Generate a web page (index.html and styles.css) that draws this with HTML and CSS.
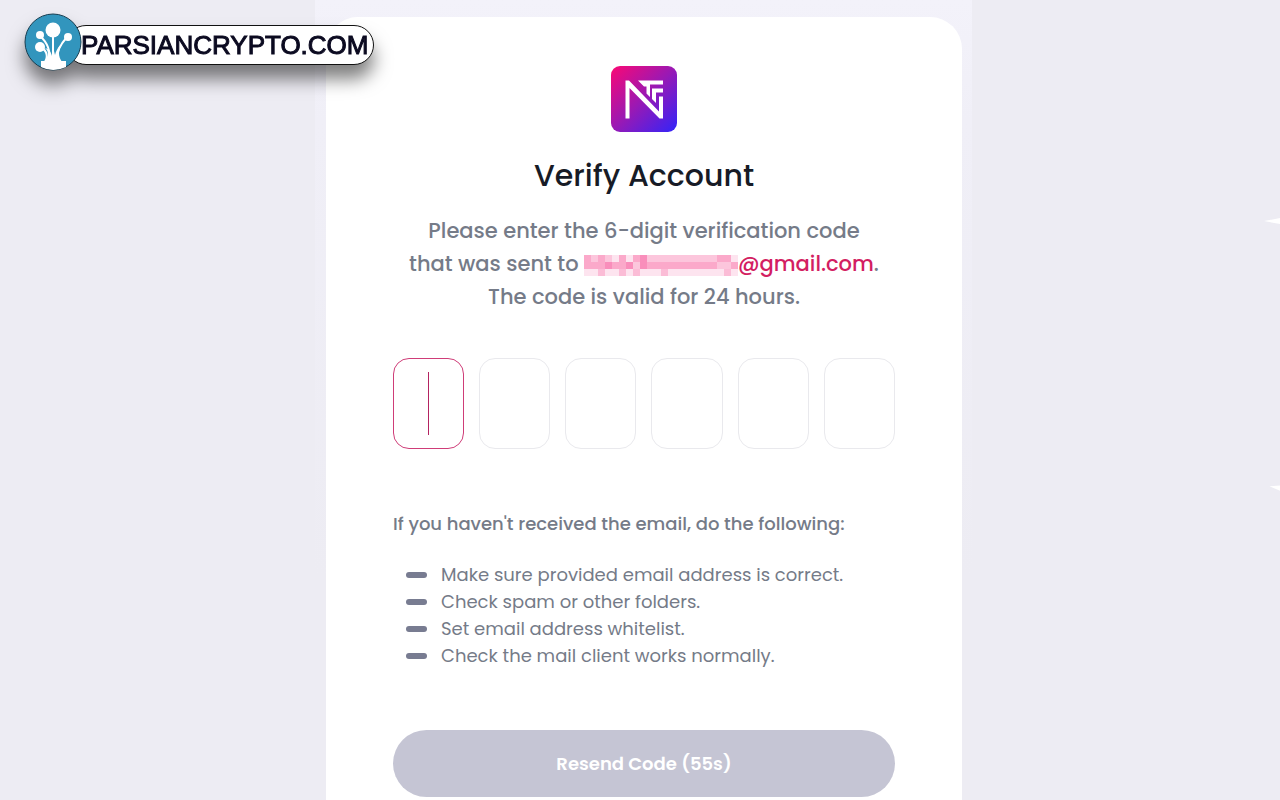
FILE: index.html
```html
<!DOCTYPE html>
<html lang="en">
<head>
<meta charset="utf-8">
<meta name="viewport" content="width=device-width, initial-scale=1">
<title>Verify Account</title>
<link rel="stylesheet" href="styles.css">
</head>
<body>
<a class="brand" href="#">
  <svg class="brand-icon" viewBox="0 0 58 58" aria-hidden="true">
    <circle cx="29" cy="29" r="28" fill="#3295bd" stroke="#173d50" stroke-width="1"/>
    <path d="M17 48H42V54Q29 60 17 54Z" fill="#fff"/>
    <path d="M21 49C25 42 22 36 14 33M25 49C27 38 24 30 16 23M29 49V18M32 49C33 38 36 32 43 24" fill="none" stroke="#fff" stroke-width="2"/>
    <path d="M20 49C25 43 25 38 21 35C25 36 27 39 28 43L29 34L31 42C33 35 36 32 38 31C34 38 34 43 38 49Z" fill="#fff"/>
    <g fill="#fff"><circle cx="29" cy="17" r="7.500"/><circle cx="16" cy="22" r="4"/><circle cx="16" cy="34" r="5"/><circle cx="44" cy="24" r="4"/></g>
  </svg>
  <span class="brand-name">PARSIANCRYPTO.COM</span>
</a>
<svg class="spark spark-upper" viewBox="0 0 16 8" aria-hidden="true"><path d="M0 4L16 1V7Z"/></svg>
<svg class="spark spark-lower" viewBox="0 0 16 8" aria-hidden="true"><path d="M4 2L16 1V7Z"/></svg>
<main class="panel">
  <form class="card">
    <svg class="logo" viewBox="0 0 68 68" role="img" aria-label="Logo">
      <defs><linearGradient id="logo-fill" x1="0" y1="0" x2="1" y2="1"><stop offset="0" stop-color="#fb0874"/><stop offset=".5" stop-color="#9819b5"/><stop offset="1" stop-color="#3124fa"/></linearGradient></defs>
      <rect x="1" y="1" width="66" height="66" rx="9" fill="url(#logo-fill)"/>
      <path d="M15.500 53.500V15.500H19L49 46.500V31.500H53V53.500H49.500L19.500 23V53.500Z" fill="#fff"/>
      <path d="M28 15.500H53V19.500H40V32L36.500 28.500V21.500H34ZM41.500 23.500H53V27.500H46V38L42 34V23.500Z" fill="#fff"/>
    </svg>
    <h1 class="title">Verify Account</h1>
    <p class="intro">Please enter the 6-digit verification code<br>that was sent to <span class="email"><svg class="mask" viewBox="0 0 22 3" preserveAspectRatio="none" shape-rendering="crispEdges" aria-hidden="true">
      <path fill="#fcc6dc" d="M0 0H22V2H0Z"/><path fill="#fde4ef" d="M0 2H22V3H0Z"/>
      <path fill="#fba9ca" d="M0 0H1V2H0ZM2 0H3V1H2ZM1 1H3V2H1ZM5 0H6V1H5ZM4 1H7V2H4ZM7 0H9V1H7ZM8 1H19V2H8ZM19 0H21V1H19ZM21 1H22V2H21Z"/>
      <path fill="#f98ebb" d="M3 1H4V2H3ZM6 1H7V2H6ZM8 0H9V2H8Z"/>
      <path fill="#fbbcd6" d="M2 2H3V3H2ZM5 2H6V3H5ZM7 2H8V3H7ZM20 2H21V3H20ZM11 2H12V3H11Z"/>
      <path fill="#fde4ef" d="M4 0H5V1H4ZM6 0H7V1H6ZM21 0H22V1H21Z"/>
    </svg>@gmail.com</span>.<br>The code is valid for 24 hours.</p>
    <div class="code">
      <label class="digit active"><input type="text" inputmode="numeric" maxlength="1" aria-label="Digit 1"></label>
      <label class="digit"><input type="text" inputmode="numeric" maxlength="1" aria-label="Digit 2"></label>
      <label class="digit"><input type="text" inputmode="numeric" maxlength="1" aria-label="Digit 3"></label>
      <label class="digit"><input type="text" inputmode="numeric" maxlength="1" aria-label="Digit 4"></label>
      <label class="digit"><input type="text" inputmode="numeric" maxlength="1" aria-label="Digit 5"></label>
      <label class="digit"><input type="text" inputmode="numeric" maxlength="1" aria-label="Digit 6"></label>
    </div>
    <h2 class="help-title">If you haven't received the email, do the following:</h2>
    <ul class="help-list">
      <li>Make sure provided email address is correct.</li>
      <li>Check spam or other folders.</li>
      <li>Set email address whitelist.</li>
      <li>Check the mail client works normally.</li>
    </ul>
    <button class="resend" type="button">Resend Code (55s)</button>
  </form>
</main>
</body>
</html>
```
FILE: styles.css
```css
* { box-sizing: border-box; }

body {
  margin: 0;
  padding-left: 7px;
  position: relative;
  overflow-x: hidden;
  background: #edecf3;
  color: #757b88;
  font-family: Poppins, Inter, "Open Sans", sans-serif;
}

.panel {
  display: flex;
  max-width: 657px;
  min-height: 100vh;
  margin: 0 auto;
  padding: 17px 10px 0 11px;
  background: linear-gradient(#f3f2fa, #f0eff7 120px, #edecf3 580px);
}

.card {
  flex: 1;
  min-width: 0;
  display: flex;
  flex-direction: column;
  padding: 48px 67px 3px;
  border-radius: 32px 32px 0 0;
  background: #fff;
}

.logo { width: 68px; height: 68px; align-self: center; }

.title {
  margin: 21px 0 16px;
  color: #171b26;
  font-size: 30px;
  font-weight: 500;
  line-height: 44px;
  text-align: center;
}

.intro {
  margin: 0 -8px;
  font-size: 21px;
  font-weight: 500;
  line-height: 33px;
  text-align: center;
}

.email { color: #d31e62; white-space: nowrap; }

.mask { width: 154px; height: 21px; vertical-align: -5px; }

.code {
  display: grid;
  grid-template-columns: repeat(6, 1fr);
  gap: 15px;
  margin-top: 45px;
}

.digit { position: relative; display: block; }

.digit input {
  display: block;
  width: 100%;
  height: 91px;
  border: 1px solid #e9e9ed;
  border-radius: 16px;
  background: #fff;
  color: #171b26;
  font: inherit;
  font-size: 30px;
  text-align: center;
  outline: none;
}

.active input { border-color: #cf3d78; caret-color: transparent; }

.active::after {
  content: "";
  position: absolute;
  top: 14px;
  left: calc(50% - 1px);
  width: 1px;
  height: 63px;
  background: #b42361;
}

.help-title {
  margin: 61px 0 23px;
  font-size: 18px;
  font-weight: 500;
  line-height: 28px;
}

.help-list {
  margin: 0 0 61px;
  padding: 0 0 0 13px;
  list-style: none;
  font-size: 18px;
  line-height: 27px;
}

.help-list li { display: flex; align-items: center; gap: 14px; }

.help-list li::before {
  content: "";
  width: 21px;
  height: 6px;
  border-radius: 3px;
  background: #787c91;
}

.resend {
  width: 100%;
  height: 67px;
  border: 0;
  border-radius: 34px;
  background: #c5c5d4;
  color: #fff;
  font: inherit;
  font-size: 18px;
  font-weight: 600;
}

.brand {
  position: absolute;
  z-index: 1;
  top: 13px;
  left: 24px;
  display: flex;
  align-items: center;
  color: #0b0a20;
  text-decoration: none;
  filter: drop-shadow(0 14px 9px rgba(0, 0, 0, 0.5));
}

.brand-icon { position: relative; z-index: 1; width: 58px; height: 58px; }

.brand-name {
  margin: 6px 0 0 -16px;
  padding: 0 4px 0 14px;
  border: 1px solid #111;
  border-radius: 20px;
  background: #fff;
  font-family: "Liberation Sans", Arial, sans-serif;
  font-size: 26px;
  line-height: 38px;
  -webkit-text-stroke: 1px #0b0a20;
}

.spark { position: absolute; right: 0; width: 16px; height: 8px; fill: #fff; }
.spark-upper { top: 217px; }
.spark-lower { top: 484px; width: 14px; }
```
